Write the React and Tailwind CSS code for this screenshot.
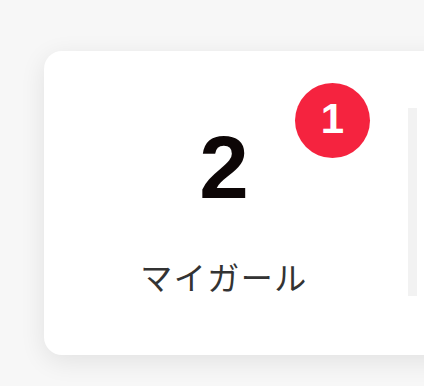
import React from "react";

const App = () => {
  return (
    <div className="w-[424px] h-[386px] overflow-hidden bg-[#f7f7f7] pt-[51px] pl-[44px]">
      <div className="w-[420px] h-[304px] bg-white rounded-[18px] shadow-[0_6px_26px_rgba(0,0,0,0.09)] flex items-center">
        <div className="relative w-[360px] h-full flex flex-col items-center">
          <div className="mt-[72px] text-[89px] leading-none font-bold text-[#0d0606] font-['Liberation_Sans',Arial,sans-serif]">
            2
          </div>
          <div className="mt-[48px] text-[32px] leading-none tracking-[1.5px] text-[#333] font-['Noto_Sans_CJK_JP',sans-serif]">
            マイガール
          </div>
          <div className="absolute left-[251px] top-[32px] w-[75px] h-[75px] rounded-full bg-[#f5233f] flex items-center justify-center">
            <span className="text-white text-[42px] font-bold leading-none font-['Liberation_Sans',Arial,sans-serif] -mt-[3px]">1</span>
          </div>
        </div>
        <div className="ml-[4px] w-[9px] h-[188px] bg-[#f2f2f2] -mt-[2px]"></div>
      </div>
    </div>
  );
};

export default App;
